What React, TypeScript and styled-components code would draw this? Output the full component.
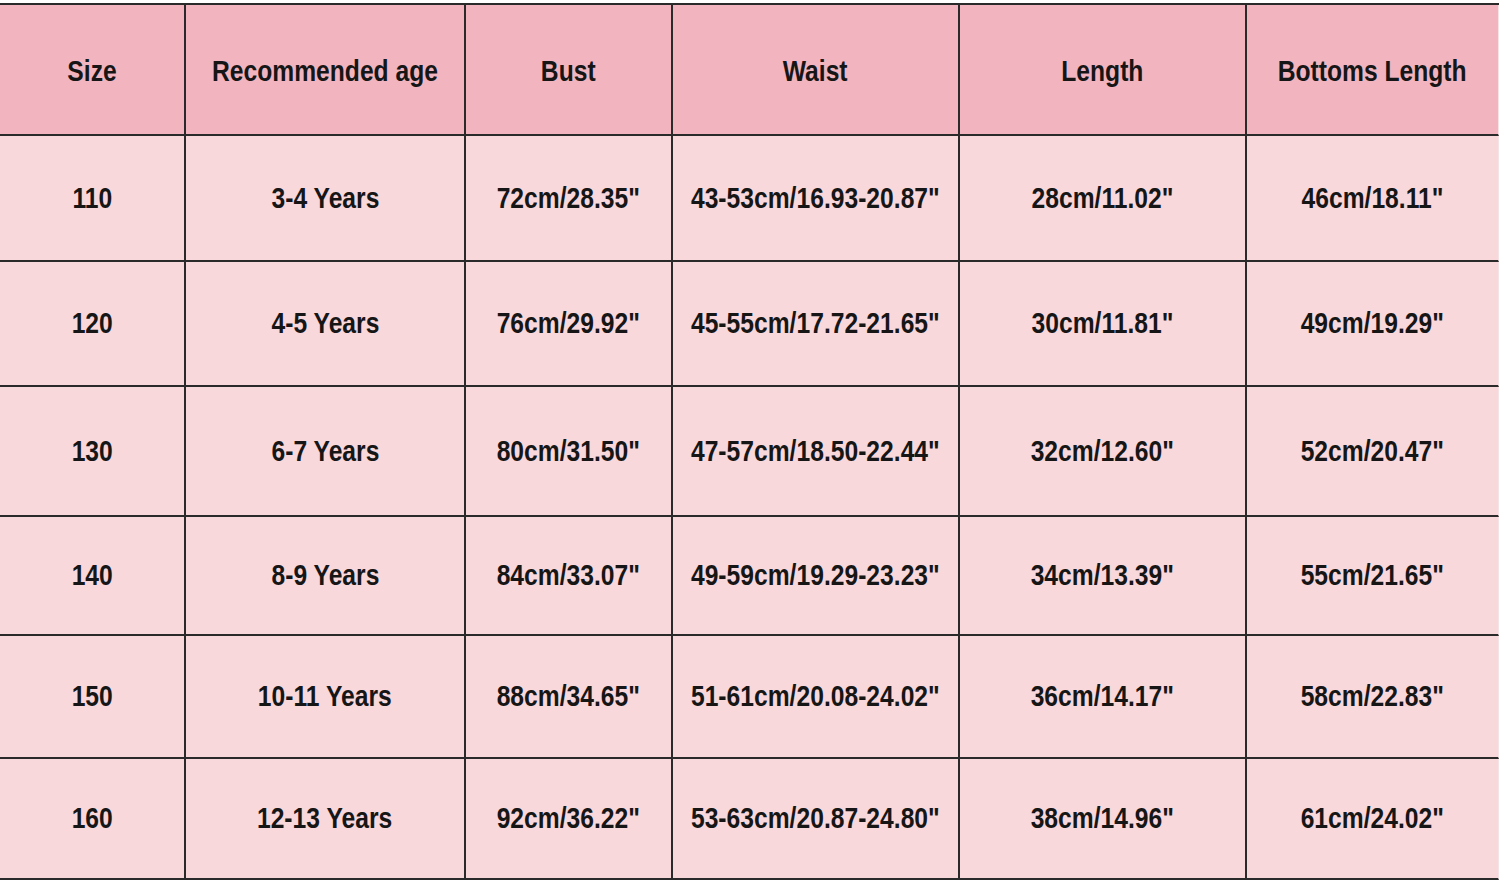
import React from 'react';
import styled, { createGlobalStyle } from 'styled-components';

const GlobalStyle = createGlobalStyle`
  html, body {
    margin: 0;
    padding: 0;
    background: #ffffff;
  }
`;

const Page = styled.div`
  width: 1500px;
  height: 883px;
  padding-top: 3px;
  box-sizing: border-box;
  background: #ffffff;
  overflow: hidden;
`;

const Table = styled.div`
  display: grid;
  width: 1499px;
  grid-template-columns: 186px 280px 207px 287px 287px 252px;
  grid-template-rows: 131px 126px 125px 130px 119px 123px 121px;
  border-top: 2px solid #2a2a2a;
  font-family: "Liberation Sans", Arial, sans-serif;
  font-weight: 700;
  color: #161616;
`;

const Cell = styled.div<{ $head?: boolean; $last?: boolean }>`
  display: flex;
  align-items: center;
  justify-content: center;
  box-sizing: border-box;
  border-bottom: 2px solid #2a2a2a;
  border-right: ${(p) => (p.$last ? '1px solid #f4e4e6' : '2px solid #2a2a2a')};
  background: ${(p) => (p.$head ? '#f2b5c0' : '#f9d8dc')};
  padding-top: ${(p) => (p.$head ? '4px' : '0')};
  font-size: 29px;
  white-space: nowrap;
`;

const Label = styled.span`
  display: inline-block;
  transform: scaleX(0.85);
  transform-origin: center;
`;

const headers = ['Size', 'Recommended age', 'Bust', 'Waist', 'Length', 'Bottoms Length'];

const rows = [
  ['110', '3-4 Years', '72cm/28.35"', '43-53cm/16.93-20.87"', '28cm/11.02"', '46cm/18.11"'],
  ['120', '4-5 Years', '76cm/29.92"', '45-55cm/17.72-21.65"', '30cm/11.81"', '49cm/19.29"'],
  ['130', '6-7 Years', '80cm/31.50"', '47-57cm/18.50-22.44"', '32cm/12.60"', '52cm/20.47"'],
  ['140', '8-9 Years', '84cm/33.07"', '49-59cm/19.29-23.23"', '34cm/13.39"', '55cm/21.65"'],
  ['150', '10-11 Years', '88cm/34.65"', '51-61cm/20.08-24.02"', '36cm/14.17"', '58cm/22.83"'],
  ['160', '12-13 Years', '92cm/36.22"', '53-63cm/20.87-24.80"', '38cm/14.96"', '61cm/24.02"'],
];

export default function App() {
  return (
    <Page>
      <GlobalStyle />
      <Table>
        {headers.map((h, i) => (
          <Cell key={h} $head $last={i === headers.length - 1}>
            <Label>{h}</Label>
          </Cell>
        ))}
        {rows.map((r, ri) =>
          r.map((v, ci) => (
            <Cell key={`${ri}-${ci}`} $last={ci === r.length - 1}>
              <Label>{v}</Label>
            </Cell>
          ))
        )}
      </Table>
    </Page>
  );
}
